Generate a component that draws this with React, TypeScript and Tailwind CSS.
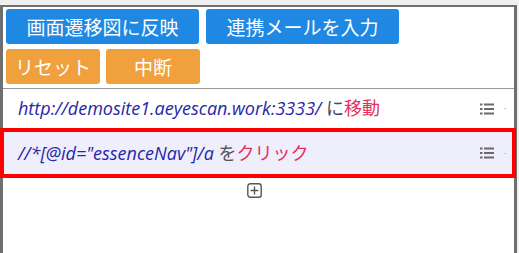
export default function App() {
  return (
    <div className="w-[519px] h-[253px] overflow-hidden bg-[#efefef] pt-[5px]" style={{ fontFamily: '"Noto Sans", "Noto Sans CJK JP", sans-serif' }}>
      <div className="w-[517px] h-[260px] bg-white border-l-[3px] border-r-[3px] border-t-2 border-[#6f6f6f]">
        <div className="pl-[3px] pt-[2px] pb-[4px] flex flex-col gap-[5px]">
          <div className="flex gap-[7px]">
            <ActionButton label="画面遷移図に反映" color="blue" wide />
            <ActionButton label="連携メールを入力" color="blue" wide />
          </div>
          <div className="flex gap-[6px]">
            <ActionButton label="リセット" color="orange" />
            <ActionButton label="中断" color="orange" />
          </div>
        </div>
        <div className="border-t border-[#9a9a9a]">
          <StepRow>
            <span className="italic text-[#2626a8]">http://demosite1.aeyescan.work:3333/</span>
            <span className="text-[#3d4866]"> に</span>
            <span className="text-[#e5305c]">移動</span>
          </StepRow>
          <div className="relative">
            <StepRow selected>
              <span className="italic text-[#2626a8]">//*[@id="essenceNav"]/a</span>
              <span className="text-[#555]"> を</span>
              <span className="text-[#e5305c]">クリック</span>
            </StepRow>
            <div className="absolute -left-[3px] -right-[2px] top-0 bottom-0 border-4 border-[#ff0000]" />
          </div>
          <div className="flex justify-center pt-[5px] pr-[9px]">
            <PlusBox />
          </div>
        </div>
      </div>
    </div>
  );
}

function ActionButton({ label, color, wide }: { label: string; color: 'blue' | 'orange'; wide?: boolean }) {
  const bg = color === 'blue' ? 'bg-[#1f88e2]' : 'bg-[#f0a03c]';
  return (
    <button
      className={`${bg} ${wide ? 'w-[193px]' : 'w-[94px]'} h-[35px] rounded-[3px] text-white text-[19px] leading-none flex items-center justify-center`}
      style={{ fontFamily: '"Noto Sans CJK JP", sans-serif' }}
    >
      {label}
    </button>
  );
}

function StepRow({ children, selected }: { children: React.ReactNode; selected?: boolean }) {
  return (
    <div className={`flex items-center pl-[15px] pr-[8px] ${selected ? 'h-[50px] bg-[#eeeefc]' : 'h-[39px]'}`}>
      <div className="flex-1 text-[18px] whitespace-nowrap" style={{ fontFamily: '"Open Sans", "Noto Sans CJK JP", sans-serif' }}>
        {children}
      </div>
      <ListIcon />
      <span className="ml-[10px] w-[2px] h-[1px] bg-[#c8c8c8]" />
    </div>
  );
}

function ListIcon() {
  return (
    <svg width="14" height="12" viewBox="0 0 14 12" className="text-[#6a6a6a]" fill="currentColor">
      <rect x="0" y="0.5" width="2.5" height="2" />
      <rect x="4" y="0.5" width="10" height="2" />
      <rect x="0" y="5" width="2.5" height="2" />
      <rect x="4" y="5" width="10" height="2" />
      <rect x="0" y="9.5" width="2.5" height="2" />
      <rect x="4" y="9.5" width="10" height="2" />
    </svg>
  );
}

function PlusBox() {
  return (
    <svg width="15" height="15" viewBox="0 0 15 15" fill="none" stroke="#555" strokeWidth={1.4}>
      <rect x="0.8" y="0.8" width="13.4" height="13.4" rx="2.5" />
      <path d="M7.5 3.6v7.8M3.6 7.5h7.8" />
    </svg>
  );
}
